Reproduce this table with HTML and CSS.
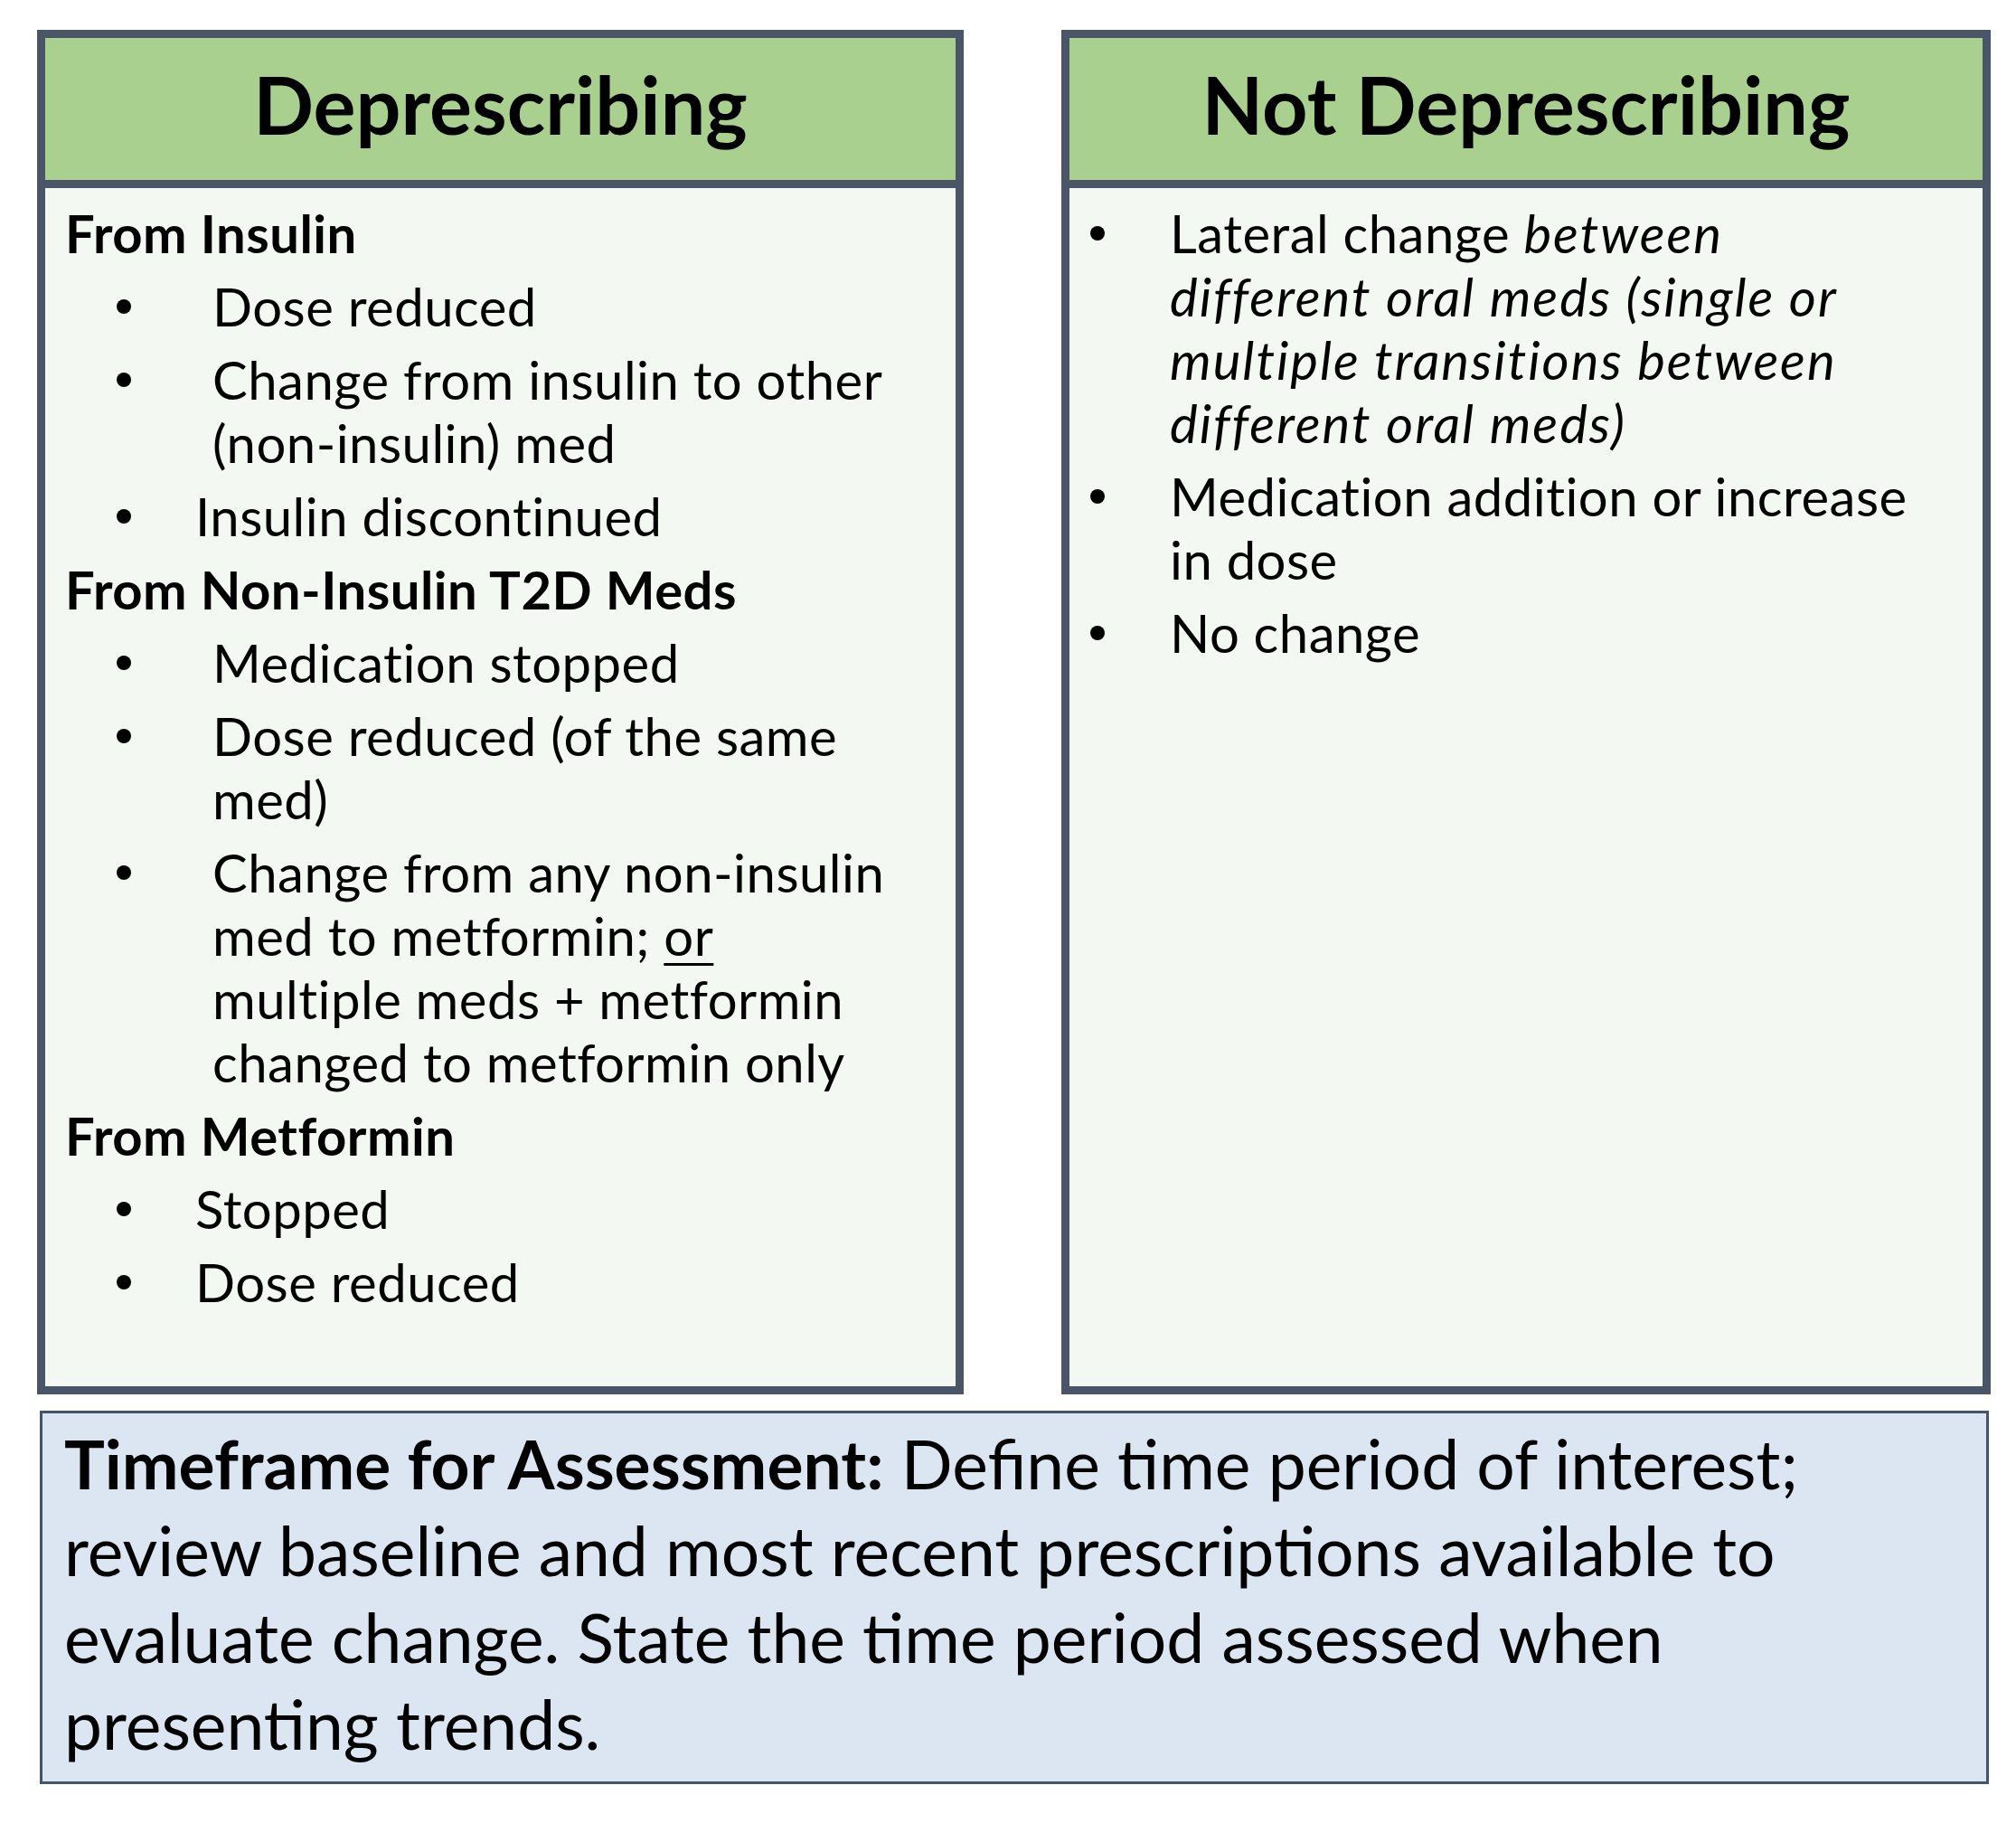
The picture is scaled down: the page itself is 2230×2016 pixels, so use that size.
FILE: index.html
```html
<!DOCTYPE html>
<html lang="en">
<head>
<meta charset="utf-8">
<title>Deprescribing criteria</title>
<link rel="stylesheet" href="styles.css">
</head>
<body>
<main class="page">
  <div class="cards">
    <section class="card">
      <h2 class="card-head">Deprescribing</h2>
      <div class="card-body">
        <p class="group">From Insulin</p>
        <ul class="items wide">
          <li><span>Dose reduced</span></li>
          <li><span>Change from insulin to other<br>(non-insulin) med</span></li>
        </ul>
        <ul class="items narrow">
          <li><span>Insulin discontinued</span></li>
        </ul>
        <p class="group">From Non-Insulin T2D Meds</p>
        <ul class="items wide">
          <li><span>Medication stopped</span></li>
          <li><span>Dose reduced (of the same<br>med)</span></li>
          <li><span>Change from any non-insulin<br>med to metformin; <u>or</u><br>multiple meds + metformin<br>changed to metformin only</span></li>
        </ul>
        <p class="group">From Metformin</p>
        <ul class="items narrow">
          <li><span>Stopped</span></li>
          <li><span>Dose reduced</span></li>
        </ul>
      </div>
    </section>
    <section class="card">
      <h2 class="card-head">Not Deprescribing</h2>
      <div class="card-body">
        <ul class="items right">
          <li><span>Lateral change <em>between<br>different oral meds (single or<br>multiple transitions between<br>different oral meds)</em></span></li>
          <li><span>Medication addition or increase<br>in dose</span></li>
          <li><span>No change</span></li>
        </ul>
      </div>
    </section>
  </div>
  <div class="timeframe">
    <p><strong>Timeframe for Assessment:</strong> Define time period of interest;<br>review baseline and most recent prescriptions available to<br>evaluate change. State the time period assessed when<br>presenting trends.</p>
  </div>
</main>
</body>
</html>
```

FILE: styles.css
```css
html, body {
  margin: 0;
  padding: 0;
  background: #ffffff;
}

body {
  font-family: Lato, "Noto Sans", "Liberation Sans", sans-serif;
  color: #000000;
}

.page {
  width: 2230px;
  height: 2016px;
  padding: 33px 0 0 41px;
  box-sizing: border-box;
}

.cards {
  display: grid;
  grid-template-columns: 1025px 1028px;
  column-gap: 108px;
  align-items: stretch;
}

.card {
  display: flex;
  flex-direction: column;
  border: 9px solid #4a5668;
  background: #f4f8f2;
}

.card-head {
  margin: 0;
  height: 145px;
  padding-bottom: 12px;
  box-sizing: content-box;
  display: flex;
  align-items: center;
  justify-content: center;
  background: #a9d08e;
  border-bottom: 9px solid #4a5668;
  font-size: 88px;
  font-weight: 700;
  line-height: 1;
  white-space: nowrap;
}

.card-body {
  min-height: 1325px;
  box-sizing: border-box;
  padding: 15px 0 0 22px;
  font-size: 58px;
  letter-spacing: 0.5px;
  line-height: 70px;
  white-space: nowrap;
}

.group {
  margin: 0 0 11px;
  font-weight: 700;
}

.items {
  list-style: none;
  margin: 0;
  padding: 0;
}

.items li {
  display: flex;
  align-items: flex-start;
  margin: 0 0 11px;
}

.items li::before {
  content: "";
  flex: none;
  width: 16px;
  height: 16px;
  border-radius: 50%;
  background: #000000;
  margin-top: 27px;
  margin-left: 57px;
}

.items.wide li::before {
  margin-right: 90px;
}

.items.narrow li::before {
  margin-right: 71px;
}

.items.right li::before {
  margin-left: 1px;
  margin-right: 72px;
}

.items em {
  font-style: italic;
  letter-spacing: 2px;
}

.items u {
  text-decoration-thickness: 3px;
  text-underline-offset: 8px;
}

.timeframe {
  margin: 18px 0 0 3px;
  width: 2156px;
  height: 413px;
  box-sizing: border-box;
  border: 3px solid #44546a;
  background: #dce6f2;
  padding: 7px 0 0 24px;
}

.timeframe p {
  margin: 0;
  font-size: 75px;
  line-height: 96px;
  white-space: nowrap;
}

.timeframe strong {
  font-weight: 700;
}
```
